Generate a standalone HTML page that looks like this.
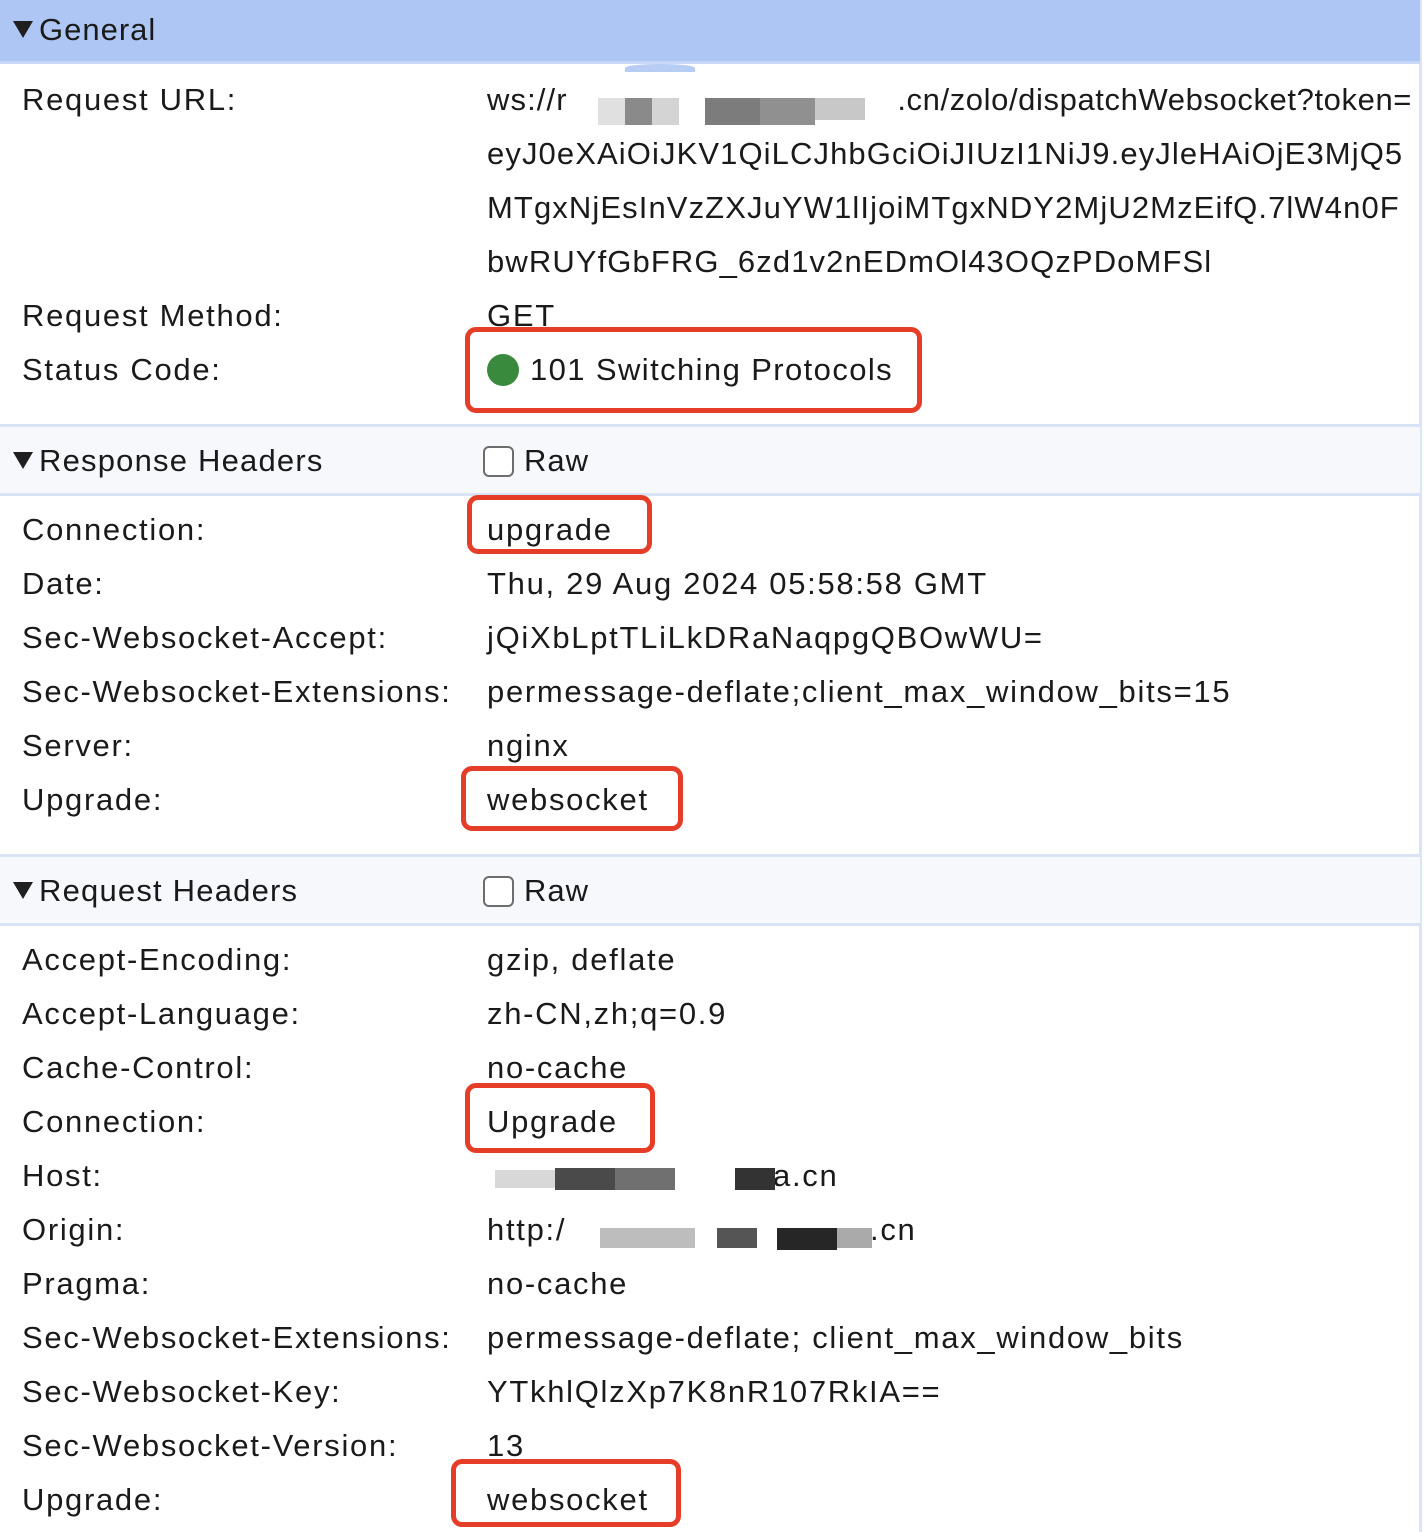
<!DOCTYPE html>
<html><head><meta charset="utf-8"><style>
*{margin:0;padding:0;box-sizing:border-box}
body{width:1424px;height:1532px;background:#fff;position:relative;overflow:hidden;font-family:"Liberation Sans",sans-serif;color:#1a1a1a;font-size:31px}
.t{position:absolute;line-height:54px;height:54px;white-space:nowrap;letter-spacing:1.7px;z-index:3}
.l{left:22px}
.v{left:487px}
.u{letter-spacing:1.1px}
.bar{position:absolute;left:0;width:1420px}
.box{position:absolute;border:5px solid #e63d28;border-radius:11px;background:#fff;z-index:2}
.cb{position:absolute;width:31px;height:31px;border:2px solid #6d6d6d;border-radius:6px;background:#fff;left:483px}
.tri{display:inline-block;width:0;height:0;border-left:10px solid transparent;border-right:10px solid transparent;border-top:17px solid #1f1f1f;margin-right:6px;vertical-align:2px}
.px{position:absolute;z-index:4}
</style></head><body>
<div style="position:absolute;left:1419px;top:0;width:3px;height:1532px;background:#dbe5f7"></div>
<div class="bar" style="top:0;height:64px;background:#adc6f3;border-bottom:3px solid #c7d7f6"></div>
<div class="t l" style="top:3px;left:13px;letter-spacing:1px"><span class="tri"></span>General</div>
<div style="position:absolute;left:625px;top:64px;width:70px;height:8px;background:#b8cdf4;border-radius:50% 50% 0 0"></div>

<div class="t l" style="top:73px">Request URL:</div>
<div class="t v u" style="top:73px">ws://r</div>
<div class="t u" style="top:73px;right:12px;letter-spacing:0.6px">.cn/zolo/dispatchWebsocket?token=</div>
<div class="px" style="left:598px;top:98px;width:27px;height:27px;background:#e0e0e0"></div>
<div class="px" style="left:625px;top:98px;width:27px;height:27px;background:#8a8a8a"></div>
<div class="px" style="left:652px;top:98px;width:27px;height:27px;background:#d4d4d4"></div>
<div class="px" style="left:705px;top:98px;width:55px;height:27px;background:#7c7c7c"></div>
<div class="px" style="left:760px;top:98px;width:55px;height:27px;background:#909090"></div>
<div class="px" style="left:815px;top:98px;width:50px;height:22px;background:#c8c8c8"></div>
<div class="t v u" style="top:127px">eyJ0eXAiOiJKV1QiLCJhbGciOiJIUzI1NiJ9.eyJleHAiOjE3MjQ5</div>
<div class="t v u" style="top:181px">MTgxNjEsInVzZXJuYW1lIjoiMTgxNDY2MjU2MzEifQ.7lW4n0F</div>
<div class="t v u" style="top:235px">bwRUYfGbFRG_6zd1v2nEDmOl43OQzPDoMFSl</div>
<div class="t l" style="top:289px">Request Method:</div>
<div class="t v" style="top:289px;z-index:1">GET</div>
<div class="box" style="left:465px;top:327px;width:457px;height:86px"></div>
<div class="t l" style="top:343px">Status Code:</div>
<div style="position:absolute;left:487px;top:354px;width:32px;height:32px;border-radius:50%;background:#3a8a3e;z-index:3"></div>
<div class="t" style="top:343px;left:530px;letter-spacing:1.4px">101 Switching Protocols</div>

<div class="bar" style="top:424px;height:72px;background:#f6f8fc;border-top:3px solid #d9e3f6;border-bottom:3px solid #d9e3f6"></div>
<div class="t l" style="top:434px;left:13px;letter-spacing:1.2px"><span class="tri"></span>Response Headers</div>
<div class="cb" style="top:446px"></div>
<div class="t" style="top:434px;left:524px;letter-spacing:1px">Raw</div>

<div class="box" style="left:467px;top:495px;width:185px;height:59px"></div>
<div class="t l" style="top:503px">Connection:</div>
<div class="t v" style="top:503px">upgrade</div>
<div class="t l" style="top:557px">Date:</div>
<div class="t v" style="top:557px">Thu, 29 Aug 2024 05:58:58 GMT</div>
<div class="t l" style="top:611px">Sec-Websocket-Accept:</div>
<div class="t v" style="top:611px">jQiXbLptTLiLkDRaNaqpgQBOwWU=</div>
<div class="t l" style="top:665px">Sec-Websocket-Extensions:</div>
<div class="t v" style="top:665px">permessage-deflate;client_max_window_bits=15</div>
<div class="t l" style="top:719px">Server:</div>
<div class="t v" style="top:719px">nginx</div>
<div class="box" style="left:461px;top:766px;width:222px;height:65px"></div>
<div class="t l" style="top:773px">Upgrade:</div>
<div class="t v" style="top:773px">websocket</div>

<div class="bar" style="top:854px;height:72px;background:#f6f8fc;border-top:3px solid #d9e3f6;border-bottom:3px solid #d9e3f6"></div>
<div class="t l" style="top:864px;left:13px;letter-spacing:1.2px"><span class="tri"></span>Request Headers</div>
<div class="cb" style="top:876px"></div>
<div class="t" style="top:864px;left:524px;letter-spacing:1px">Raw</div>

<div class="t l" style="top:933px">Accept-Encoding:</div>
<div class="t v" style="top:933px">gzip, deflate</div>
<div class="t l" style="top:987px">Accept-Language:</div>
<div class="t v" style="top:987px">zh-CN,zh;q=0.9</div>
<div class="t l" style="top:1041px">Cache-Control:</div>
<div class="t v" style="top:1041px;z-index:1">no-cache</div>
<div class="box" style="left:465px;top:1083px;width:190px;height:70px"></div>
<div class="t l" style="top:1095px">Connection:</div>
<div class="t v" style="top:1095px">Upgrade</div>
<div class="t l" style="top:1149px">Host:</div>
<div class="t" style="top:1149px;left:773px">a.cn</div>
<div class="px" style="left:495px;top:1170px;width:60px;height:18px;background:#d8d8d8"></div>
<div class="px" style="left:555px;top:1168px;width:60px;height:22px;background:#4a4a4a"></div>
<div class="px" style="left:615px;top:1168px;width:60px;height:22px;background:#707070"></div>
<div class="px" style="left:735px;top:1168px;width:40px;height:22px;background:#333"></div>
<div class="t l" style="top:1203px">Origin:</div>
<div class="t v" style="top:1203px">http:/</div>
<div class="t" style="top:1203px;left:870px">.cn</div>
<div class="px" style="left:600px;top:1228px;width:95px;height:20px;background:#bdbdbd"></div>
<div class="px" style="left:717px;top:1228px;width:40px;height:20px;background:#555"></div>
<div class="px" style="left:777px;top:1228px;width:60px;height:22px;background:#262626"></div>
<div class="px" style="left:837px;top:1228px;width:35px;height:20px;background:#aaa"></div>
<div class="t l" style="top:1257px">Pragma:</div>
<div class="t v" style="top:1257px">no-cache</div>
<div class="t l" style="top:1311px">Sec-Websocket-Extensions:</div>
<div class="t v" style="top:1311px">permessage-deflate; client_max_window_bits</div>
<div class="t l" style="top:1365px">Sec-Websocket-Key:</div>
<div class="t v" style="top:1365px">YTkhlQlzXp7K8nR107RkIA==</div>
<div class="t l" style="top:1419px">Sec-Websocket-Version:</div>
<div class="t v" style="top:1419px;z-index:1">13</div>
<div class="box" style="left:451px;top:1459px;width:230px;height:68px"></div>
<div class="t l" style="top:1473px">Upgrade:</div>
<div class="t v" style="top:1473px">websocket</div>
</body></html>
